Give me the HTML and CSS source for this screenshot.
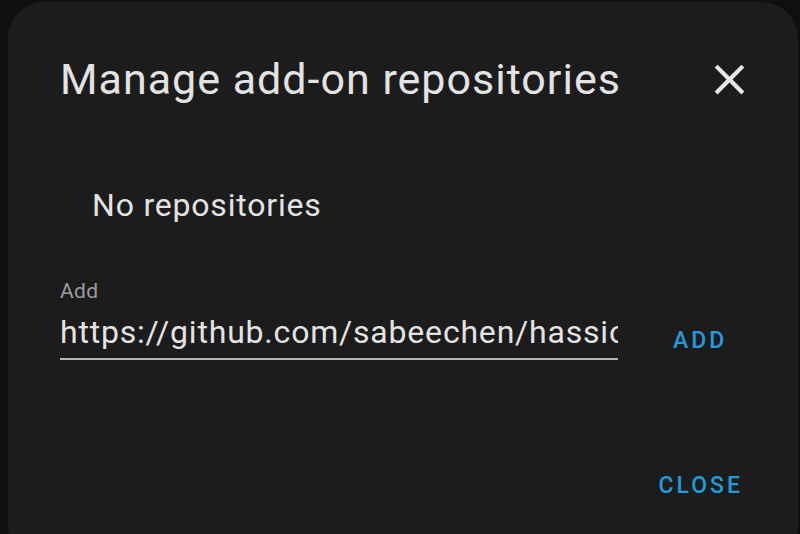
FILE: index.html
```html
<!DOCTYPE html>
<html>
<head>
<meta charset="utf-8">
<link rel="stylesheet" href="styles.css">
</head>
<body>
<div class="dialog">
  <div class="header">
    <h2 class="title">Manage add-on repositories</h2>
    <svg class="close-icon" viewBox="0 0 24 24" width="51" height="51"><path fill="#e6e6e6" d="M19,6.41L17.59,5L12,10.59L6.41,5L5,6.41L10.59,12L5,17.59L6.41,19L12,13.41L17.59,19L19,17.59L13.41,12L19,6.41Z"/></svg>
  </div>
  <div class="empty">No repositories</div>
  <div class="add-row">
    <label class="field">
      <span class="label">Add</span>
      <input class="input" type="text" readonly value="https://github.com/sabeechen/hassio-google-drive-backup">
    </label>
    <div class="btn add-btn">ADD</div>
  </div>
  <div class="actions">
    <div class="btn">CLOSE</div>
  </div>
</div>
</body>
</html>
```
FILE: styles.css
```css
html, body {
  margin: 0;
  padding: 0;
  background: #0f0f0f;
  overflow: hidden;
  height: 534px;
}
.dialog {
  margin: 2px 0 0 8px;
  width: 790px;
  height: 560px;
  background: #1c1c1c;
  border-radius: 36px;
  box-sizing: border-box;
  padding: 52px 44px 0 52px;
  font-family: Roboto, "Liberation Sans", sans-serif;
  color: #e3e3e3;
  display: flex;
  flex-direction: column;
}
.header {
  display: flex;
  align-items: center;
  justify-content: space-between;
  height: 50px;
}
.title {
  margin: 0;
  font-size: 43px;
  font-weight: 400;
  line-height: 50px;
  letter-spacing: 1px;
  color: #e3e3e3;
}
.close-icon {
  display: block;
  margin-right: -1px;
}
.empty {
  margin-top: 81px;
  padding-left: 32px;
  font-size: 32px;
  line-height: 40px;
  letter-spacing: 0.8px;
}
.add-row {
  display: flex;
  align-items: flex-end;
  margin-top: 54px;
}
.field {
  display: flex;
  flex-direction: column;
  width: 558px;
  border-bottom: 2px solid #b4b4b4;
}
.label {
  display: block;
  font-size: 21px;
  line-height: 24px;
  color: #9c9c9c;
  letter-spacing: 0.4px;
}
.input {
  display: block;
  width: 100%;
  box-sizing: border-box;
  margin: 7px 0 0 0;
  padding: 0 0 4px 0;
  height: 48px;
  border: none;
  outline: none;
  background: transparent;
  font-family: inherit;
  font-size: 32px;
  line-height: 44px;
  color: #e3e3e3;
  letter-spacing: 0.8px;
}
.btn {
  font-size: 23px;
  font-weight: 500;
  line-height: 24px;
  letter-spacing: 3px;
  color: #219bd9;
}
.add-btn {
  margin-left: 55px;
  margin-bottom: 7px;
}
.actions {
  display: flex;
  justify-content: flex-end;
  margin-top: 114px;
  padding-right: 11px;
}
```
